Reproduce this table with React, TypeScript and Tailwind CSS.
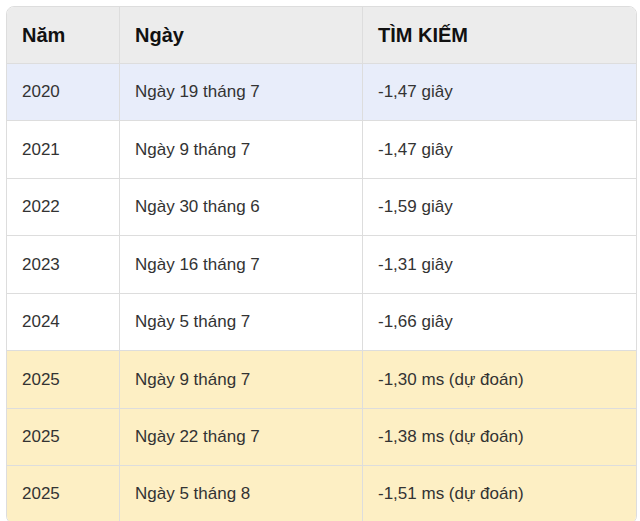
import React from "react";

const rows: { y: string; d: string; v: string; kind: "blue" | "white" | "yellow" }[] = [
  { y: "2020", d: "Ngày 19 tháng 7", v: "-1,47 giây", kind: "blue" },
  { y: "2021", d: "Ngày 9 tháng 7", v: "-1,47 giây", kind: "white" },
  { y: "2022", d: "Ngày 30 tháng 6", v: "-1,59 giây", kind: "white" },
  { y: "2023", d: "Ngày 16 tháng 7", v: "-1,31 giây", kind: "white" },
  { y: "2024", d: "Ngày 5 tháng 7", v: "-1,66 giây", kind: "white" },
  { y: "2025", d: "Ngày 9 tháng 7", v: "-1,30 ms (dự đoán)", kind: "yellow" },
  { y: "2025", d: "Ngày 22 tháng 7", v: "-1,38 ms (dự đoán)", kind: "yellow" },
  { y: "2025", d: "Ngày 5 tháng 8", v: "-1,51 ms (dự đoán)", kind: "yellow" },
];

export default function App() {
  return (
    <div className="w-[640px] h-[521px] overflow-hidden bg-white pt-[6px] pl-[6px]" style={{ fontFamily: '"Liberation Sans", Arial, sans-serif' }}>
      <div className="w-[631px] rounded-[8px] border border-[#dddddd] overflow-hidden">
        <div className="grid grid-cols-[113px_243px_1fr] h-[57px] bg-[#ececec] border-b border-[#dddddd] text-[20px] font-bold text-[#111111]">
          <div className="flex items-center pl-[15px] border-r border-[#dddddd]">Năm</div>
          <div className="flex items-center pl-[15px] border-r border-[#dddddd]">Ngày</div>
          <div className="flex items-center pl-[15px]">TÌM KIẾM</div>
        </div>
        {rows.map((r, i) => (
          <div
            key={i}
            className={
              "grid grid-cols-[113px_243px_1fr] h-[57.43px] border-b border-[#dddddd] text-[17px] text-[#333333] " +
              (r.kind === "blue" ? "bg-[#e8edfa]" : r.kind === "yellow" ? "bg-[#fdefc4]" : "bg-white")
            }
          >
            <div className="flex items-center pl-[15px] border-r border-[#dddddd]">{r.y}</div>
            <div className="flex items-center pl-[15px] border-r border-[#dddddd]">{r.d}</div>
            <div className="flex items-center pl-[15px]">{r.v}</div>
          </div>
        ))}
      </div>
    </div>
  );
}
